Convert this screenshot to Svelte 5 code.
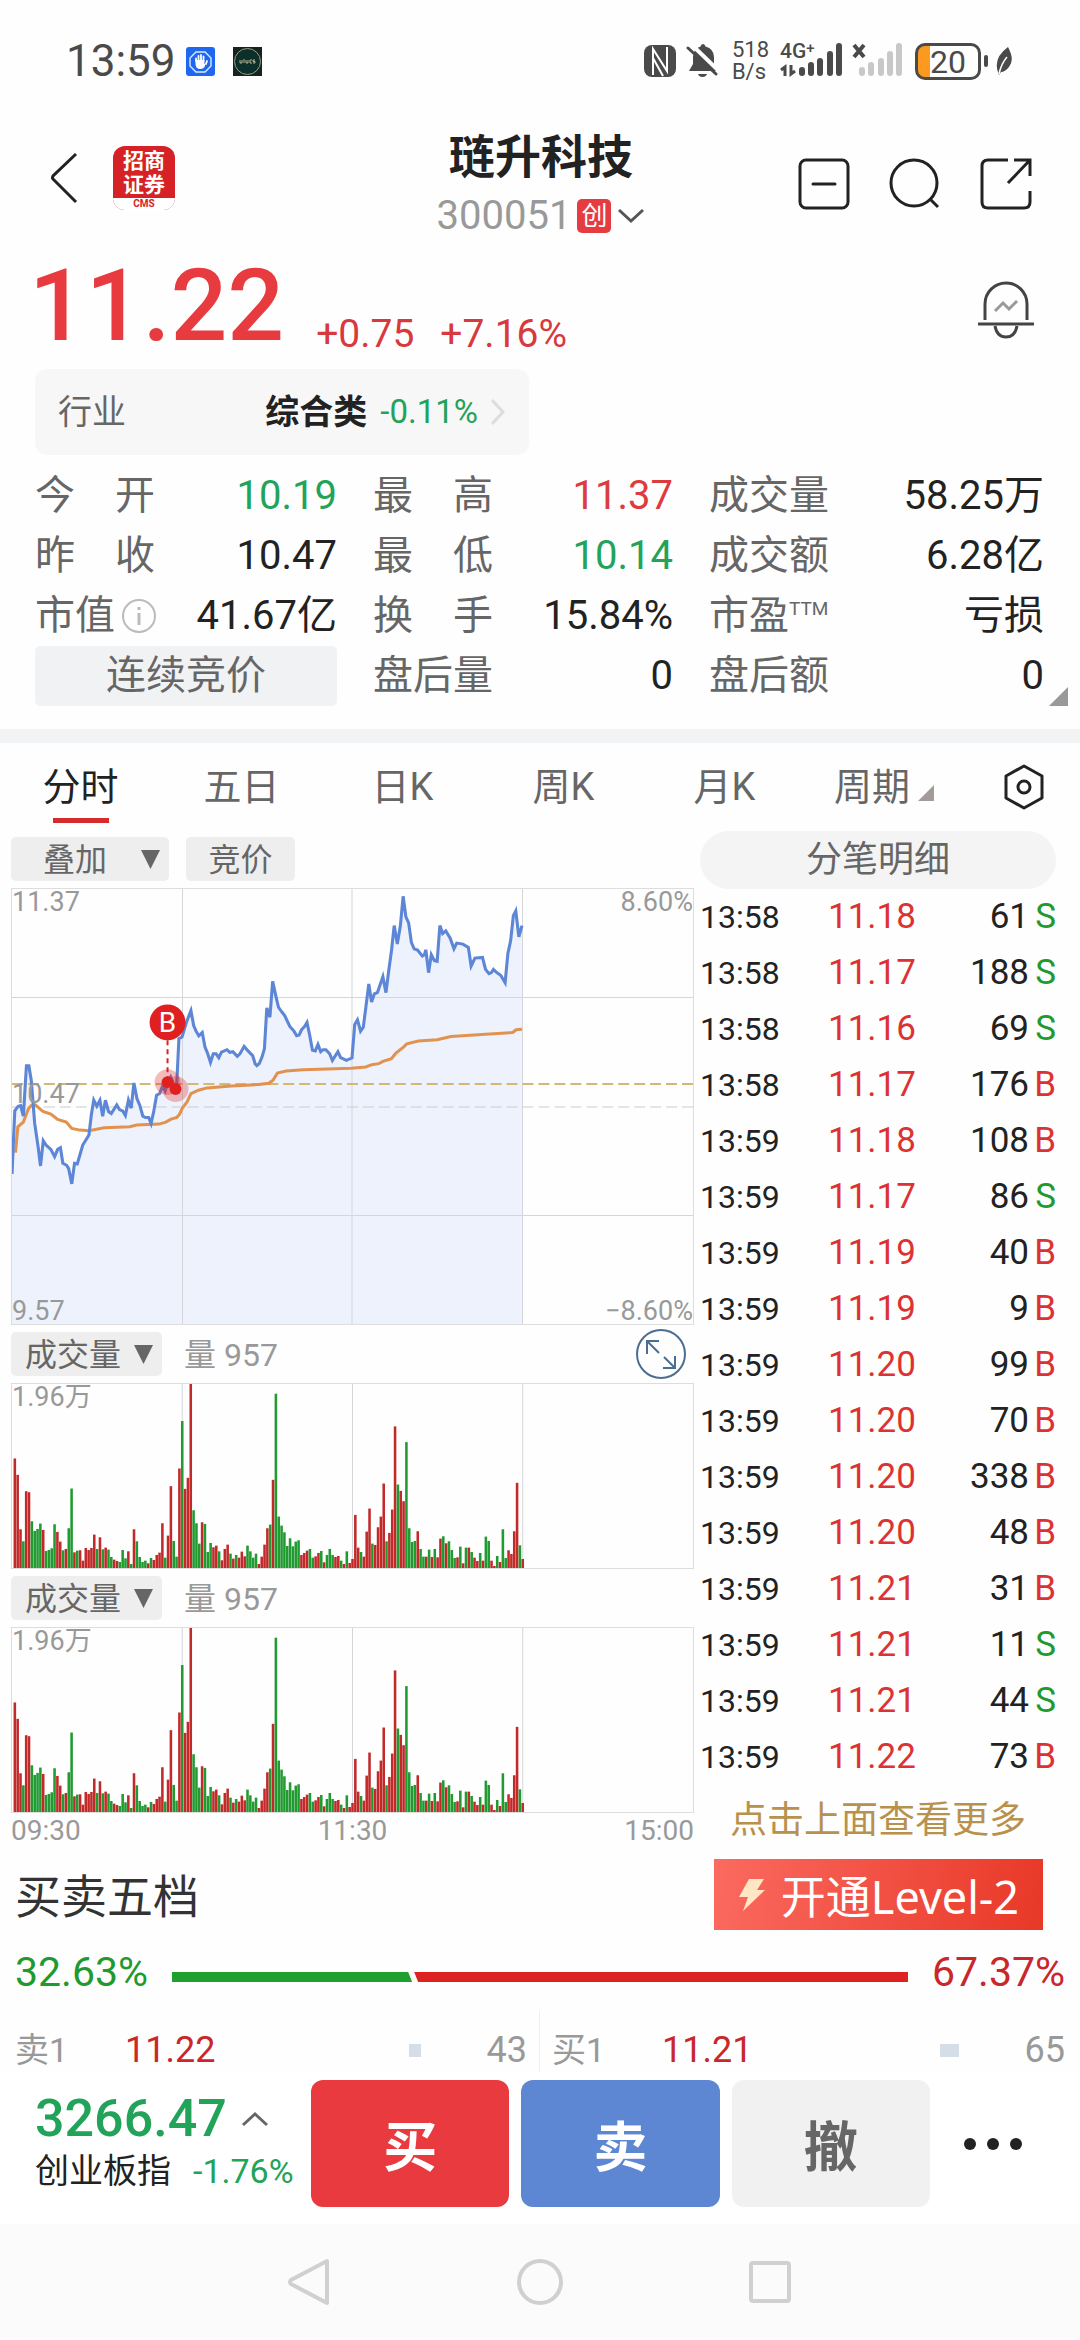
<script lang="ts">
	const tabs = ['分时', '五日', '日K', '周K', '月K'];
	let activeTab = $state('分时');

	const stats = [
		{ label: '今　开', value: '10.19', tone: 'green' },
		{ label: '最　高', value: '11.37', tone: 'red' },
		{ label: '成交量', value: '58.25万' },
		{ label: '昨　收', value: '10.47' },
		{ label: '最　低', value: '10.14', tone: 'green' },
		{ label: '成交额', value: '6.28亿' },
		{ label: '市值', value: '41.67亿', info: true },
		{ label: '换　手', value: '15.84%' },
		{ label: '市盈', value: '亏损', sup: 'TTM' }
	];

	const ticks = [
		['13:58', '11.18', 61, 'S'],
		['13:58', '11.17', 188, 'S'],
		['13:58', '11.16', 69, 'S'],
		['13:58', '11.17', 176, 'B'],
		['13:59', '11.18', 108, 'B'],
		['13:59', '11.17', 86, 'S'],
		['13:59', '11.19', 40, 'B'],
		['13:59', '11.19', 9, 'B'],
		['13:59', '11.20', 99, 'B'],
		['13:59', '11.20', 70, 'B'],
		['13:59', '11.20', 338, 'B'],
		['13:59', '11.20', 48, 'B'],
		['13:59', '11.21', 31, 'B'],
		['13:59', '11.21', 11, 'S'],
		['13:59', '11.21', 44, 'S'],
		['13:59', '11.22', 73, 'B']
	];

	const pricePoints =
		'32,882 40,692 50,678 57,676 65,708 74,556 81,556 88,600 98,730 108,800 115,858 123,782 131,795 145,808 156,830 165,808 173,803 180,850 191,856 197,866 206,912 214,850 222,852 238,795 256,765 263,704 270,660 279,678 288,660 296,708 304,660 313,694 321,700 337,674 345,688 354,692 362,706 371,660 379,684 387,608 396,656 404,675 413,708 421,712 430,712 437,730 445,692 453,645 462,640 470,618 478,632 486,605 494,590 503,612 511,625 518,475 527,470 540,425 553,390 561,435 568,452 576,466 586,456 594,500 602,520 610,546 618,520 626,520 634,532 642,515 658,508 666,516 675,514 688,528 696,520 708,498 718,510 733,526 740,550 745,556 752,550 760,530 767,505 774,382 783,410 791,302 800,345 808,380 816,392 826,405 841,438 853,452 861,466 868,464 875,448 884,438 891,426 899,465 907,510 915,512 923,492 931,514 938,508 946,508 957,520 965,540 981,514 989,532 1006,540 1014,536 1022,533 1030,432 1038,418 1047,452 1055,440 1063,375 1071,310 1079,364 1087,340 1096,336 1112,288 1121,336 1129,270 1137,210 1145,134 1154,190 1163,134 1171,46 1179,108 1187,126 1195,185 1203,204 1213,208 1227,226 1233,222 1237,207 1245,276 1253,222 1262,240 1270,242 1278,134 1286,158 1295,150 1308,172 1319,204 1327,187 1345,190 1361,200 1369,256 1380,232 1402,230 1411,266 1421,279 1428,276 1434,266 1444,276 1455,284 1468,306 1476,218 1484,180 1492,104 1499,90 1508,168 1517,134';
	const averagePoints =
		'42,818 49,740 65,726 80,685 88,676 100,674 122,694 145,702 165,718 190,726 206,745 230,750 256,752 300,743 375,740 395,735 460,732 480,726 495,717 512,712 520,702 528,684 542,665 553,640 575,630 600,623 670,617 750,613 780,609 792,600 805,578 830,572 880,568 1020,564 1062,560 1080,553 1100,550 1112,543 1137,535 1150,518 1172,500 1182,490 1215,482 1270,478 1310,468 1400,462 1490,456 1500,448 1517,446';

	// one entry per minute, r = up, g = down
	const volumes =
		'r328 r279 r116 g80 r230 r227 g140 g111 g117 g133 r114 g51 g54 g59 g131 r108 r79 g53 r57 g119 g238 r47 g52 r53 r22 r60 r54 r60 r100 g57 r92 g56 r61 g55 g33 r25 r21 g18 g54 g29 r50 g12 r116 g80 g33 g18 g22 r14 g30 r24 r39 r46 r134 g31 r97 r245 g81 g34 r298 g440 r237 r270 r551 g173 g134 g73 r137 g132 g48 g75 r62 r67 g50 r23 r57 r70 g43 r28 g39 r31 r49 r35 g67 g50 g31 g43 r12 r34 r70 r119 g130 r264 g522 g154 g127 g107 g66 g89 g65 g79 g83 r39 r45 r52 g57 g31 r35 r45 g51 r17 g39 g57 g39 r33 r36 g22 r12 g50 r15 r27 r159 r61 g48 r34 r109 r178 g73 r69 r122 r154 r253 g80 r105 r175 r424 g250 r231 r200 g377 g119 g78 g81 r110 g57 g34 r34 g55 r33 g57 r32 r88 g95 r74 g80 g54 g30 r32 g64 r14 g61 r61 g48 r31 r21 g45 r22 g94 g81 r22 r6 g36 r18 g116 g30 r53 r42 r110 r255 g68 r27'
			.split(' ')
			.map((v) => ({ up: v[0] === 'r', size: Number(v.slice(1)) }));

	const sellRatio = 32.63;
</script>

{#snippet volumePanel()}
	<div class="volume-head">
		<span class="dropdown">
			<select aria-label="副图指标">
				<option>成交量</option>
			</select>
			<span class="caret-down"></span>
		</span>
		<span class="volume-now">量 957</span>
	</div>
	<div class="volume-box">
		<svg viewBox="0 0 240 551" preserveAspectRatio="none">
			<path class="grid" d="M60 0V551M120 0V551M180 0V551" />
			{#each volumes as bar, i}
				<rect
					x={i + 0.55}
					y={551 - bar.size}
					width="0.9"
					height={bar.size}
					fill={bar.up ? '#c22a2a' : '#219a31'}
				/>
			{/each}
		</svg>
		<span class="mark top-left">1.96万</span>
	</div>
{/snippet}

<div class="screen">
	<div class="status">
		<span class="clock">13:59</span>
		<svg class="app-dot" viewBox="0 0 29 29">
			<rect width="29" height="29" rx="3" fill="#1d68ee" />
			<path d="M10 5h9l6 6v8l-6 6h-9l-6-6v-8z" fill="none" stroke="#dce9ff" stroke-width="1.4" />
			<path d="M10 14v-2.500M12.500 15V9M15 15V8M17.500 15V9.500M20 17l1-3" stroke="#fff" stroke-width="1.800" stroke-linecap="round" />
			<path d="M9.500 13h8.800v4l1.700-1-1.500 4q-1 2-4 2-5 0-5-5z" fill="#fff" />
		</svg>
		<svg class="app-dot" viewBox="0 0 29 29">
			<rect width="29" height="29" fill="#142420" />
			<circle cx="14.500" cy="14.500" r="13" fill="#0b302b" stroke="#a49a78" stroke-width="1" />
			<path d="M7 13v3h2v-3M11 12v4M13 13v3h2v-3M17 13h2M17 16h2M17 13v3M22 13h-2v1.500h2V16h-2" fill="none" stroke="#c9bf98" stroke-width="0.900" />
		</svg>
		<span class="spacer"></span>
		<svg width="32" height="34" viewBox="0 0 32 34">
			<rect y="1" width="32" height="32" rx="8" fill="#4a4a4a" />
			<path d="M9 31V5l14 22V3M9 14l10 18" fill="none" stroke="#fff" stroke-width="2" />
		</svg>
		<svg width="34" height="36" viewBox="0 0 34 36">
			<path d="M17 1q2 0 2.500 2.500Q28 6 28 14v7l3 7H3l4-7v-7Q7 6 14.500 3.500 15 1 17 1zM12 31h9q-1 3-4.500 3t-4.500-3z" fill="#4a4a4a" />
			<path d="M5 1l29 28" stroke="#fff" stroke-width="4" />
			<path d="M2 5l28 26" stroke="#4a4a4a" stroke-width="3" stroke-linecap="round" />
		</svg>
		<div class="speed">
			<span>518</span>
			<span>B/s</span>
		</div>
		<span class="signal">
			<svg width="62" height="40" viewBox="0 0 62 40">
				<g stroke="#4a4a4a" stroke-width="6" stroke-linecap="round">
					<path d="M22 32v-3M31 32v-8M40 32V20M50 32V13M59 32V5" />
				</g>
				<path d="M5 35V26l-4 3M11 24v9l4-3" fill="none" stroke="#4a4a4a" stroke-width="3" />
			</svg>
			<span class="network"><span>4G</span><small>+</small></span>
		</span>
		<svg width="50" height="40" viewBox="0 0 50 40">
			<path d="M2 4l10 12M12 4L2 16" stroke="#4a4a4a" stroke-width="4" />
			<g stroke="#c8c8c8" stroke-width="6" stroke-linecap="round">
				<path d="M10 32v-3M19 32v-8M29 32V20M38 32V13M47 32V5" />
			</g>
		</svg>
		<span class="battery"><span class="cell">20</span><span class="tip"></span></span>
		<svg width="19" height="30" viewBox="0 0 19 30">
			<path d="M14 1q7 13 1 20-4 5-8 5l-2 3-1-3Q-1 12 14 1z" fill="#4a4a4a" />
			<path d="M5 28q2-10 8-17" fill="none" stroke="#fff" stroke-width="1.500" />
		</svg>
	</div>

	<header>
		<button class="plain back" aria-label="返回">
			<svg width="28" height="52" viewBox="0 0 28 52" fill="none" stroke="#222" stroke-width="3">
				<path d="M26 2L3 24q-1 2 0 3l23 23" />
			</svg>
		</button>
		<div class="broker">
			<span>招商<br />证券</span>
			<small>CMS</small>
		</div>
		<div class="name">
			<h1>琏升科技</h1>
			<p>
				300051<span class="board">创</span>
				<svg width="28" height="16" viewBox="0 0 28 16" fill="none" stroke="#555" stroke-width="3">
					<path d="M2 2l12 11L26 2" />
				</svg>
			</p>
		</div>
		<div class="actions">
			<button class="plain" aria-label="删除自选">
				<svg width="52" height="52" viewBox="0 0 52 52" fill="none" stroke="#222" stroke-width="3">
					<rect x="2" y="2" width="48" height="48" rx="6" />
					<path d="M15 26h22" stroke-linecap="round" />
				</svg>
			</button>
			<button class="plain" aria-label="搜索">
				<svg width="52" height="52" viewBox="0 0 52 52" fill="none" stroke="#222" stroke-width="3">
					<circle cx="25" cy="25" r="23" />
					<path d="M41 41l8 8" />
				</svg>
			</button>
			<button class="plain" aria-label="分享">
				<svg width="52" height="52" viewBox="0 0 52 52" fill="none" stroke="#222" stroke-width="3">
					<path d="M28 2H8q-6 0-6 6v36q0 6 6 6h36q6 0 6-6V33M34 2h16v16M50 2L28 25" />
				</svg>
			</button>
		</div>
	</header>

	<section class="quote">
		<strong>11.22</strong>
		<span>+0.75</span>
		<span>+7.16%</span>
		<button class="plain bell" aria-label="预警">
			<svg width="58" height="60" viewBox="0 0 58 60" fill="none" stroke="#444" stroke-width="3">
				<path d="M8 40V24a21 21 0 0 1 42 0v16M1 44h56M18 46q2 11 11 11t11-11" />
				<path d="M18 31l8-8 6 6 8-8" stroke="#999" />
			</svg>
		</button>
	</section>

	<a class="industry" href="#industry">
		<span>行业</span>
		<b>综合类</b>
		<em>-0.11%</em>
		<svg width="14" height="26" viewBox="0 0 14 26" fill="none" stroke="#ddd" stroke-width="3">
			<path d="M1 1l11 12L1 25" />
		</svg>
	</a>

	<section class="stats">
		{#each stats as item}
			<div class="stat">
				<span class="label">
					{item.label}{#if item.sup}<sup>{item.sup}</sup>{/if}
					{#if item.info}
						<svg width="36" height="36" viewBox="0 0 36 36" fill="none" stroke="#bbb" stroke-width="2">
							<circle cx="18" cy="18" r="16" />
							<path d="M18 15v12M18 9v3" stroke-width="3" />
						</svg>
					{/if}
				</span>
				<span class={item.tone}>{item.value}</span>
			</div>
		{/each}
		<button class="auction">连续竞价</button>
		<div class="stat"><span class="label">盘后量</span><span>0</span></div>
		<div class="stat"><span class="label">盘后额</span><span>0</span></div>
		<i class="corner"></i>
	</section>

	<nav class="tabs">
		{#each tabs as tab}
			<button class:active={activeTab === tab} onclick={() => (activeTab = tab)}>{tab}</button>
		{/each}
		<button class="period">周期<i></i></button>
		<button class="gear" aria-label="图表设置">
			<svg width="42" height="46" viewBox="0 0 42 46" fill="none" stroke="#222" stroke-width="3">
				<path d="M21 2l18 10v22L21 44 3 34V12z" stroke-linejoin="round" />
				<circle cx="21" cy="23" r="6" />
			</svg>
		</button>
	</nav>

	<main>
		<div class="charts">
			<div class="toolbar">
				<span class="dropdown overlay-select">
					<select aria-label="叠加">
						<option>叠加</option>
					</select>
					<span class="caret-down"></span>
				</span>
				<button class="chip">竞价</button>
			</div>

			<div class="price-box">
				<svg viewBox="0 0 683 437" preserveAspectRatio="none">
					<g transform="matrix(0.3444 0 0 0.3336 -11 -8)">
						<polygon points="{pricePoints} 1517,1334 32,1334" fill="#edf2fd" />
					</g>
					<path class="grid" d="M0 109H683M0 328H683M171 0V437M341 0V437M512 0V437" />
					<path d="M0 219H683" stroke="#ccc" stroke-width="1" stroke-dasharray="11 5" />
					<path d="M0 196H683" stroke="#d6b673" stroke-width="2" stroke-dasharray="11 5" />
					<g transform="matrix(0.3444 0 0 0.3336 -11 -8)" fill="none">
						<polyline points={averagePoints} stroke="#e2924f" stroke-width="9" />
						<polyline points={pricePoints} stroke="#5d86d6" stroke-width="9" />
					</g>
					<circle cx="156" cy="194" r="13" fill="#e02020" fill-opacity="0.3" />
					<circle cx="164" cy="201" r="13" fill="#e02020" fill-opacity="0.3" />
					<circle cx="156" cy="194" r="6" fill="#e02020" />
					<circle cx="164" cy="201" r="6" fill="#e02020" />
					<path d="M156 152V194" stroke="#e02020" stroke-width="2" stroke-dasharray="5 4" />
					<circle cx="156" cy="134" r="18" fill="#e02020" />
					<text x="156" y="144" text-anchor="middle" font-size="28" fill="#fff">B</text>
				</svg>
				<span class="mark top-left">11.37</span>
				<span class="mark middle-left">10.47</span>
				<span class="mark bottom-left">9.57</span>
				<span class="mark top-right">8.60%</span>
				<span class="mark bottom-right">−8.60%</span>
				<button class="plain expand" aria-label="全屏">
					<svg width="50" height="50" viewBox="0 0 50 50" fill="none" stroke="#4a6d91" stroke-width="2">
						<circle cx="25" cy="25" r="24" />
						<path d="M23 24L11 12M11 25V12h12M28 28l11 11M39 27v12H27" />
					</svg>
				</button>
			</div>

			{@render volumePanel()}
			{@render volumePanel()}

			<div class="axis"><span>09:30</span><span>11:30</span><span>15:00</span></div>
		</div>

		<div class="trades">
			<button class="pill">分笔明细</button>
			<table>
				<tbody>
					{#each ticks as [time, price, lots, side]}
						<tr>
							<td class="time">{time}</td>
							<td class="price">{price}</td>
							<td class="lots">{lots}</td>
							<td class="side {side === 'S' ? 'sell' : 'buy'}">{side}</td>
						</tr>
					{/each}
				</tbody>
			</table>
			<button class="more">点击上面查看更多</button>
		</div>
	</main>

	<section class="depth-head">
		<h2>买卖五档</h2>
		<button class="level2">
			<svg width="28" height="34" viewBox="0 0 28 34">
				<path d="M11 1h15l-7 11h8L5 33l5-14H1z" fill="#ffe6c4" />
			</svg>
			开通Level-2
		</button>
	</section>

	<div class="ratio">
		<span class="sell">{sellRatio}%</span>
		<div class="track">
			<span class="part-sell" style="width: {sellRatio}%"></span>
			<span class="part-buy"></span>
		</div>
		<span class="buy">67.37%</span>
	</div>

	<div class="depth">
		<div class="level">
			<span class="side-name">卖1</span><span class="buy">11.22</span><i></i><span class="amount">43</span>
		</div>
		<div class="level">
			<span class="side-name">买1</span><span class="buy">11.21</span><i class="wide"></i><span class="amount">65</span>
		</div>
	</div>

	<footer>
		<div class="index">
			<div class="index-value">
				3266.47
				<svg width="28" height="16" viewBox="0 0 28 16" fill="none" stroke="#666" stroke-width="3">
					<path d="M2 14L14 3l12 11" />
				</svg>
			</div>
			<div class="index-name">创业板指<span>-1.76%</span></div>
		</div>
		<button class="trade buy-btn">买</button>
		<button class="trade sell-btn">卖</button>
		<button class="trade cancel-btn">撤</button>
		<button class="plain dots" aria-label="更多">
			<svg width="58" height="12" viewBox="0 0 58 12" fill="#222">
				<circle cx="6" cy="6" r="6" />
				<circle cx="29" cy="6" r="6" />
				<circle cx="52" cy="6" r="6" />
			</svg>
		</button>
	</footer>

	<div class="system-nav">
		<button class="plain" aria-label="后退">
			<svg width="48" height="48" viewBox="0 0 48 48">
				<path d="M41 3v42L5 26q-2-2 0-4z" stroke-linejoin="round" />
			</svg>
		</button>
		<button class="plain" aria-label="主屏幕">
			<svg width="48" height="48" viewBox="0 0 48 48"><circle cx="24" cy="24" r="21" /></svg>
		</button>
		<button class="plain" aria-label="最近任务">
			<svg width="48" height="48" viewBox="0 0 48 48"><rect x="5" y="5" width="38" height="38" rx="2" /></svg>
		</button>
	</div>
</div>

<style>
	:global(body) {
		margin: 0;
		background: #fefefe;
	}

	.screen {
		font-family: Roboto, 'Noto Sans CJK SC', sans-serif;
		color: #222;
		background: #fefefe;
	}

	.screen :global(svg) {
		display: block;
		flex: none;
	}

	button,
	select {
		font-family: inherit;
		color: inherit;
		border: none;
		padding: 0;
		margin: 0;
		cursor: pointer;
	}

	.plain {
		background: none;
	}

	h1,
	h2,
	p {
		margin: 0;
	}

	.green {
		color: #22a35a;
	}

	.red {
		color: #dc3c40;
	}

	.sell {
		color: #1f9a30;
	}

	.buy {
		color: #c9272b;
	}

	/* status bar */
	.status {
		display: flex;
		align-items: center;
		height: 122px;
		padding: 0 67px 0 66px;
		color: #4a4a4a;
	}

	.clock {
		font-size: 44px;
		line-height: 50px;
		margin-right: 10px;
	}

	.app-dot {
		width: 29px;
		height: 29px;
		margin-right: 18px;
	}

	.spacer {
		flex: 1;
	}

	.speed {
		display: flex;
		flex-direction: column;
		font-size: 22px;
		line-height: 22px;
		margin: 0 11px 0 12px;
	}

	.status svg + svg {
		margin-left: 10px;
	}

	.status .app-dot + .app-dot {
		margin-left: 0;
	}

	.signal {
		position: relative;
		margin-right: 10px;
	}

	.network {
		position: absolute;
		top: 0;
		left: 0;
		display: flex;
		font-size: 21px;
		font-weight: 500;
		line-height: 20px;
	}

	.network small {
		font-size: 15px;
		line-height: 14px;
	}

	.battery {
		display: flex;
		align-items: center;
		gap: 3px;
		margin: 0 6px 0 13px;
	}

	.cell {
		box-sizing: border-box;
		width: 66px;
		height: 37px;
		border: 3px solid #4a4a4a;
		border-radius: 10px;
		background: linear-gradient(90deg, #fb9a1f 12px, transparent 12px);
		font-size: 32px;
		font-weight: 400;
		line-height: 32px;
		text-align: center;
	}

	.tip {
		width: 4px;
		height: 12px;
		border-radius: 2px;
		background: #4a4a4a;
	}

	/* header */
	header {
		display: grid;
		grid-template-columns: 1fr auto 1fr;
		align-items: center;
		height: 118px;
		padding: 0 48px 0 50px;
	}

	.back {
		grid-area: 1 / 1;
		justify-self: start;
		margin-bottom: 6px;
	}

	.broker {
		grid-area: 1 / 1;
		box-sizing: border-box;
		width: 62px;
		height: 64px;
		margin: 0 0 6px 63px;
		padding-top: 3px;
		border-radius: 12px;
		overflow: hidden;
		background: #d62226;
		color: #fff;
		font-size: 21px;
		font-weight: 700;
		line-height: 24px;
		text-align: center;
	}

	.broker small {
		display: block;
		margin-top: 1px;
		background: #fff;
		color: #d62226;
		font-size: 10px;
		line-height: 12px;
	}

	.name {
		grid-area: 1 / 2;
		padding-top: 6px;
		text-align: center;
	}

	h1 {
		font-size: 46px;
		line-height: 58px;
		font-weight: 700;
	}

	.name p {
		display: flex;
		align-items: center;
		justify-content: center;
		gap: 6px;
		margin-top: 6px;
		font-size: 40px;
		line-height: 48px;
		color: #999;
	}

	.board {
		width: 34px;
		border-radius: 5px;
		background: #e63b41;
		color: #fff;
		font-size: 26px;
		line-height: 34px;
	}

	.actions {
		grid-area: 1 / 3;
		justify-self: end;
		display: flex;
		gap: 39px;
		padding-top: 6px;
	}

	/* quote */
	.quote {
		display: flex;
		align-items: flex-end;
		padding: 16px 45px 0 29px;
		color: #d8393d;
		font-size: 39px;
		line-height: 44px;
	}

	.quote strong {
		font-size: 100px;
		line-height: 100px;
		font-weight: 500;
		color: #e83b40;
		margin-right: 32px;
	}

	.quote span + span {
		margin-left: 26px;
	}

	.bell {
		margin-left: auto;
		padding-bottom: 16px;
	}

	.industry {
		display: flex;
		align-items: center;
		box-sizing: border-box;
		width: 494px;
		max-width: 100%;
		height: 86px;
		margin: 13px 0 0 35px;
		padding: 0 24px 0 23px;
		border-radius: 12px;
		background: #f7f7f7;
		color: #222;
		font-size: 34px;
		line-height: 44px;
		text-decoration: none;
	}

	.industry span {
		flex: 1;
		color: #666;
	}

	.industry em {
		margin: 0 13px;
		color: #22a35a;
		font-style: normal;
		font-size: 33px;
	}

	/* stats */
	.stats {
		position: relative;
		display: grid;
		grid-template-columns: 302fr 300fr 335fr;
		column-gap: 36px;
		padding: 11px 36px 23px 35px;
		font-size: 40px;
		line-height: 60px;
	}

	.stat {
		display: flex;
		justify-content: space-between;
		white-space: nowrap;
	}

	.label {
		display: flex;
		align-items: center;
		gap: 6px;
		color: #666;
	}

	.label sup {
		align-self: flex-start;
		margin-left: -6px;
		font-size: 19px;
		line-height: 46px;
	}

	.auction {
		height: 60px;
		border-radius: 5px;
		background: #f1f2f4;
		color: #666;
		font-size: 40px;
		line-height: 58px;
	}

	.corner {
		position: absolute;
		right: 12px;
		bottom: 23px;
		width: 19px;
		height: 19px;
		background: #999;
		clip-path: polygon(100% 0, 100% 100%, 0 100%);
	}

	/* period tabs */
	.tabs {
		display: grid;
		grid-template-columns: repeat(5, 161fr) 158fr 117fr;
		border-top: 14px solid #f2f3f4;
	}

	.tabs button {
		position: relative;
		height: 88px;
		padding-bottom: 8px;
		background: none;
		color: #666;
		font-size: 38px;
	}

	.tabs .active {
		color: #222;
	}

	.tabs .active::after {
		content: '';
		position: absolute;
		left: 50%;
		bottom: 8px;
		width: 56px;
		height: 5px;
		margin-left: -28px;
		background: #d42c2c;
	}

	.tabs .period {
		display: flex;
		align-items: center;
		justify-content: center;
		gap: 8px;
	}

	.period i {
		width: 16px;
		height: 16px;
		margin-top: 20px;
		background: #a39a9a;
		clip-path: polygon(100% 0, 100% 100%, 0 100%);
	}

	.tabs .gear {
		display: flex;
		align-items: center;
		justify-content: center;
		padding: 0 0 0 5px;
	}

	/* charts and trades */
	main {
		display: grid;
		grid-template-columns: minmax(0, 683fr) minmax(0, 356fr);
		column-gap: 6px;
		padding: 0 24px 0 11px;
	}

	.charts {
		display: flex;
		flex-direction: column;
		gap: 7px;
		padding-top: 6px;
	}

	.toolbar,
	.volume-head {
		display: flex;
		height: 44px;
		line-height: 46px;
	}

	.dropdown {
		position: relative;
		width: 151px;
	}

	.dropdown select {
		display: block;
		width: 100%;
		height: 44px;
		padding-left: 14px;
		border-radius: 5px;
		background: #eee;
		color: #666;
		font-size: 32px;
		line-height: 46px;
		appearance: none;
	}

	.caret-down {
		position: absolute;
		top: 13px;
		right: 9px;
		width: 19px;
		height: 19px;
		background: #666;
		clip-path: polygon(0 0, 100% 0, 50% 100%);
		pointer-events: none;
	}

	.dropdown.overlay-select {
		width: 158px;
		margin-right: 17px;
	}

	.overlay-select select {
		padding-left: 32px;
	}

	.chip {
		width: 109px;
		border-radius: 5px;
		background: #eee;
		color: #666;
		font-size: 32px;
		line-height: 46px;
	}

	.price-box,
	.volume-box {
		position: relative;
		box-sizing: border-box;
		height: 437px;
		border: 1px solid #ddd;
	}

	.volume-box {
		height: 186px;
	}

	.price-box > svg,
	.volume-box > svg {
		width: 100%;
		height: 100%;
	}

	.grid {
		fill: none;
		stroke: #d4d6da;
		stroke-width: 1;
		vector-effect: non-scaling-stroke;
	}

	.mark {
		position: absolute;
		color: #999;
		font-size: 27px;
		line-height: 26px;
	}

	.top-left {
		top: 0;
		left: 0;
	}

	.middle-left {
		top: 192px;
		left: 0;
	}

	.bottom-left {
		bottom: 0;
		left: 0;
	}

	.top-right {
		top: 0;
		right: 0;
	}

	.bottom-right {
		bottom: 0;
		right: 0;
	}

	.expand {
		position: absolute;
		right: 7px;
		bottom: -55px;
	}

	.volume-now {
		margin-left: 22px;
		color: #999;
		font-size: 32px;
	}

	.axis {
		display: flex;
		justify-content: space-between;
		color: #999;
		font-size: 28px;
		line-height: 22px;
	}

	.trades {
		display: flex;
		flex-direction: column;
	}

	.pill {
		height: 58px;
		border-radius: 29px;
		background: #f4f4f4;
		color: #666;
		font-size: 36px;
		line-height: 56px;
	}

	table {
		width: 100%;
		border-collapse: collapse;
		font-size: 35px;
		line-height: 56px;
	}

	td {
		padding: 0;
	}

	.time {
		width: 128px;
		font-size: 32px;
	}

	.price {
		color: #dd3232;
	}

	.lots {
		text-align: right;
	}

	.side {
		width: 27px;
		text-align: right;
	}

	.side.buy {
		color: #dd3232;
	}

	.more {
		height: 64px;
		background: none;
		color: #b8924d;
		font-size: 37px;
	}

	/* order book */
	.depth-head {
		display: flex;
		align-items: flex-end;
		justify-content: space-between;
		padding: 10px 37px 0 15px;
	}

	h2 {
		font-size: 46px;
		line-height: 66px;
		font-weight: 400;
		color: #333;
	}

	.level2 {
		display: flex;
		align-items: center;
		gap: 15px;
		height: 71px;
		padding: 0 24px;
		background: linear-gradient(100deg, #fb6a60, #e83827);
		color: #fff;
		font-family: 'Noto Sans', 'Noto Sans CJK SC', sans-serif;
		font-size: 45px;
	}

	.ratio {
		display: flex;
		align-items: center;
		gap: 24px;
		padding: 17px 15px 14px;
		font-size: 41px;
		line-height: 50px;
	}

	.track {
		flex: 1;
		display: flex;
		height: 10px;
		margin-top: 10px;
	}

	.part-sell {
		background: #1f9f2d;
		clip-path: polygon(0 0, calc(100% - 4px) 0, 100% 100%, 0 100%);
	}

	.part-buy {
		flex: 1;
		margin-left: 2px;
		background: #dd2222;
		clip-path: polygon(0 0, 100% 0, 100% 100%, 4px 100%);
	}

	.depth {
		display: grid;
		grid-template-columns: 1fr 1fr;
	}

	.level {
		display: flex;
		align-items: center;
		padding: 17px 15px 0 12px;
		font-size: 36px;
		line-height: 44px;
		white-space: nowrap;
	}

	.level:first-child {
		padding: 17px 12px 0 15px;
		border-right: 1px solid #eee;
	}

	.side-name {
		width: 110px;
		color: #999;
		font-size: 34px;
	}

	.level i {
		width: 12px;
		height: 13px;
		margin-left: auto;
		background: #d5dde6;
	}

	.level .wide {
		width: 19px;
	}

	.amount {
		width: 106px;
		color: #999;
		text-align: right;
	}

	/* bottom bar */
	footer {
		display: flex;
		align-items: center;
		gap: 12px;
		padding: 8px 58px 17px 35px;
		background: #fff;
	}

	.index {
		flex: none;
		width: 264px;
		padding-bottom: 6px;
		color: #22a35a;
		white-space: nowrap;
	}

	.index-value {
		display: flex;
		align-items: center;
		gap: 14px;
		font-size: 52px;
		font-weight: 500;
		line-height: 60px;
	}

	.index-name {
		color: #222;
		font-size: 34px;
		line-height: 44px;
	}

	.index-name span {
		margin-left: 22px;
		color: #22a35a;
	}

	.trade {
		flex: 1;
		height: 127px;
		border-radius: 12px;
		color: #fff;
		font-size: 54px;
		font-weight: 700;
	}

	.buy-btn {
		background: #e93a40;
	}

	.sell-btn {
		background: #5d86d3;
	}

	.cancel-btn {
		background: #f1f1f1;
		color: #666;
	}

	.dots {
		margin-left: 22px;
	}

	.system-nav {
		display: flex;
		align-items: center;
		justify-content: center;
		gap: 182px;
		height: 115px;
		background: #fbfbfb;
	}

	.system-nav svg {
		fill: none;
		stroke: #d0d0d0;
		stroke-width: 4;
	}
</style>
